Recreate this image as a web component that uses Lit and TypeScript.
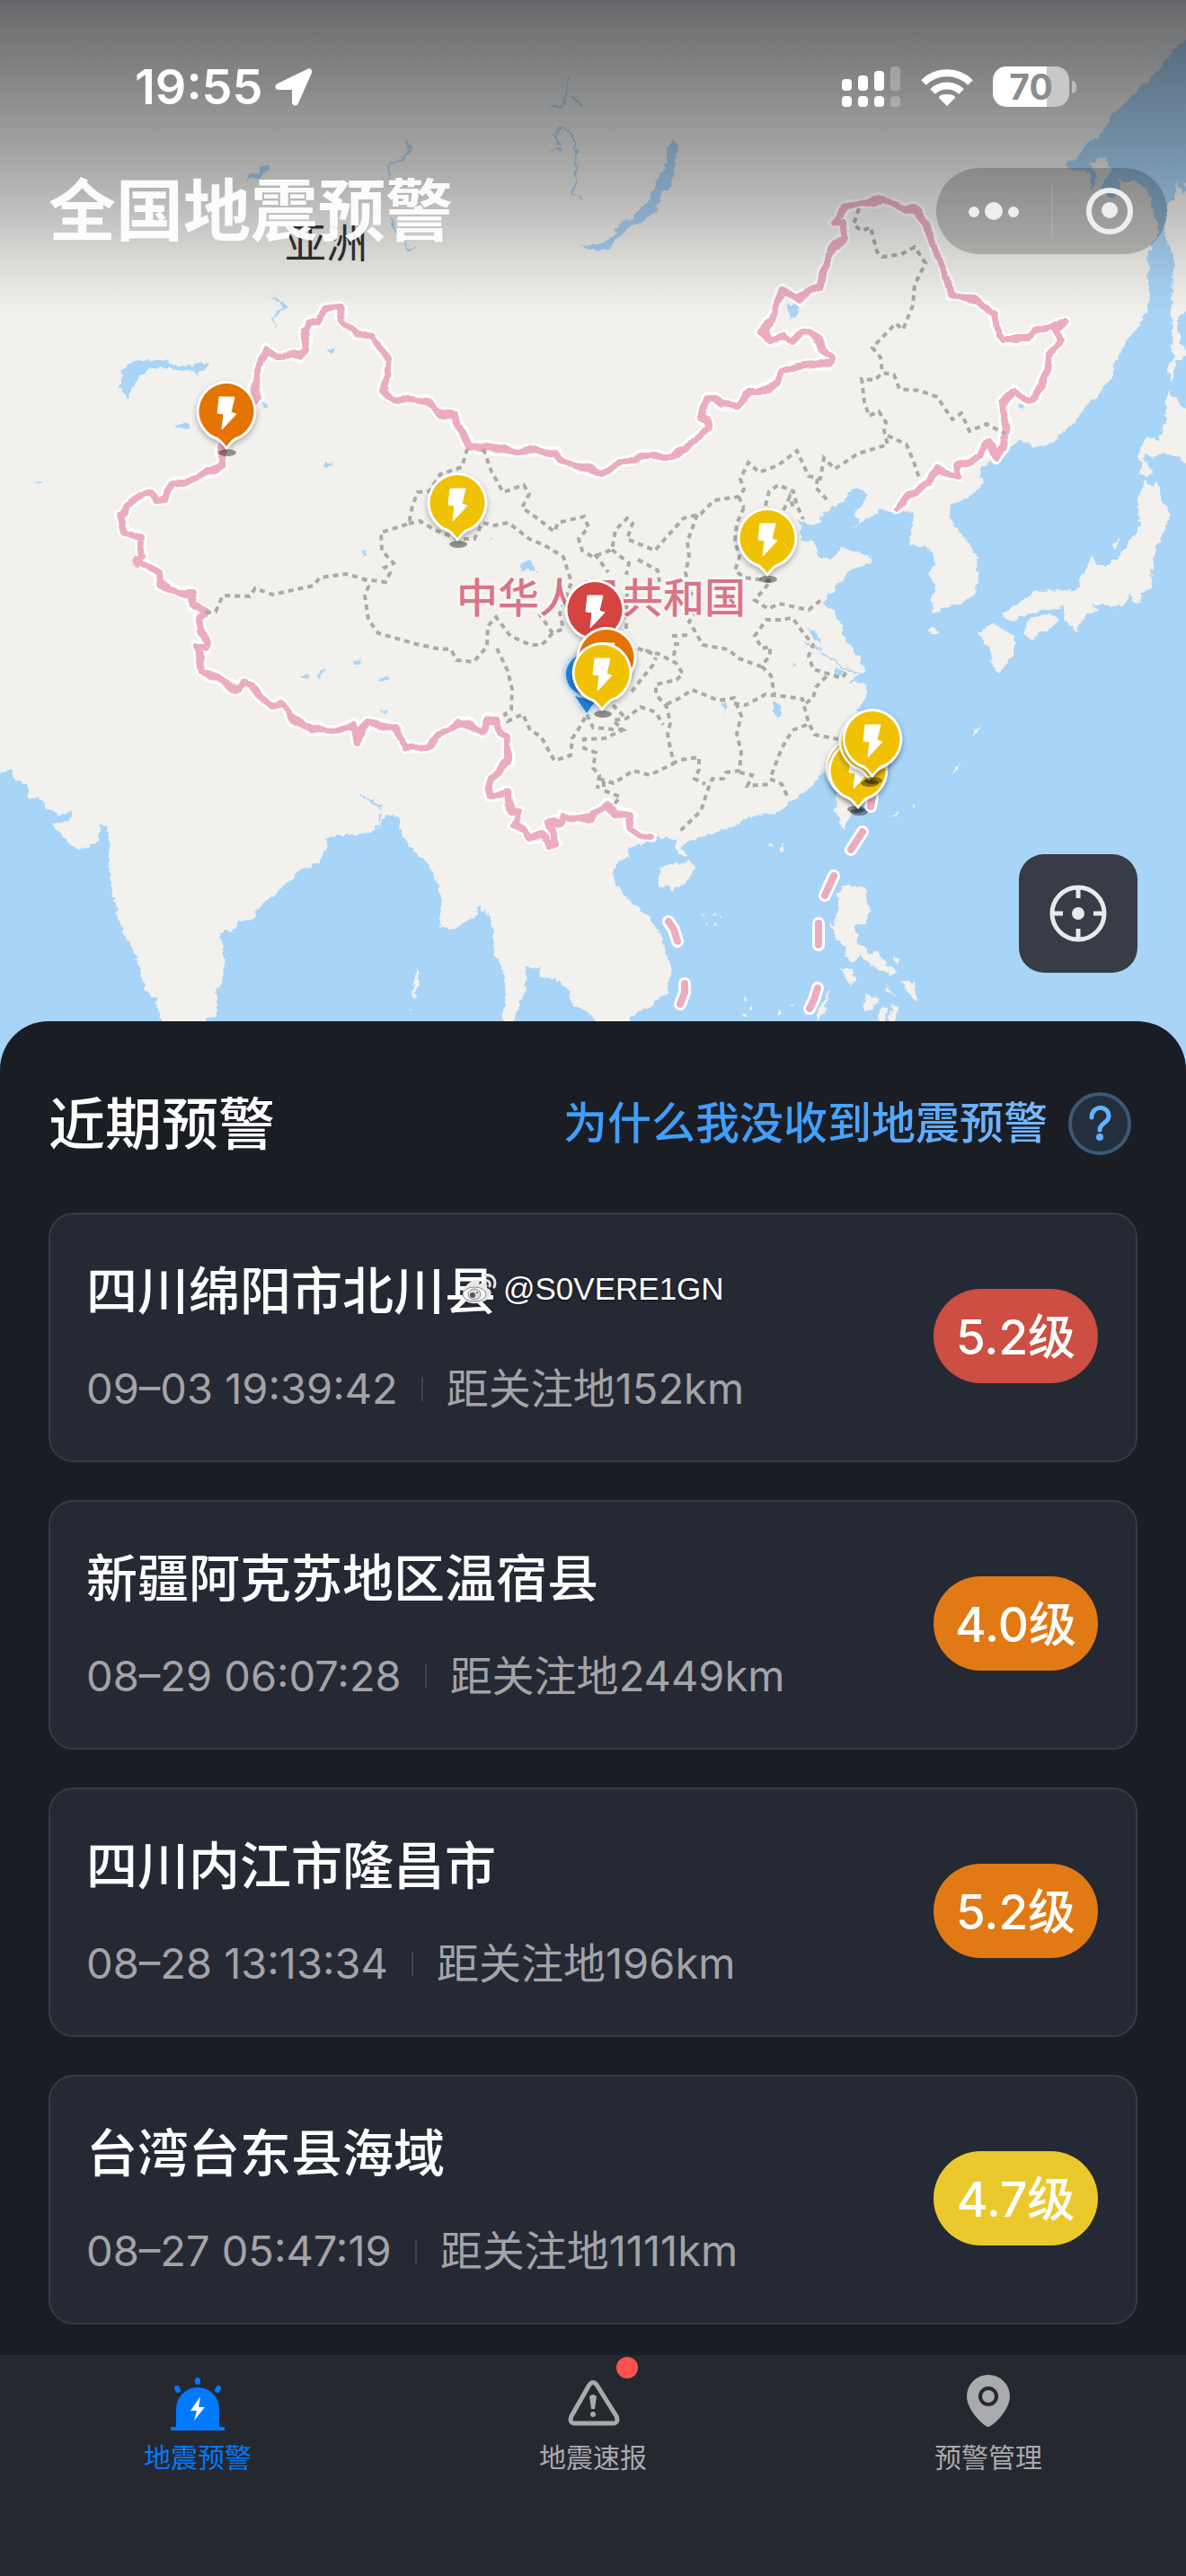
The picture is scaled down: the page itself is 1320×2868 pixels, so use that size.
import { LitElement, css, html, nothing, svg, type PropertyDeclarations } from 'lit';

type Level = 'red' | 'orange' | 'yellow';

interface Quake {
    place: string;
    time: string;
    distance: number;
    magnitude: string;
    level: Level;
}

interface Pin {
    x: number;
    y: number;
    level: Level;
}

const QUAKES: Quake[] = [
    { place: '四川绵阳市北川县', time: '09–03 19:39:42', distance: 152, magnitude: '5.2', level: 'red' },
    { place: '新疆阿克苏地区温宿县', time: '08–29 06:07:28', distance: 2449, magnitude: '4.0', level: 'orange' },
    { place: '四川内江市隆昌市', time: '08–28 13:13:34', distance: 196, magnitude: '5.2', level: 'orange' },
    { place: '台湾台东县海域', time: '08–27 05:47:19', distance: 1111, magnitude: '4.7', level: 'yellow' }
];

const PINS: Pin[] = [
    { x: 252, y: 458, level: 'orange' },
    { x: 509, y: 560, level: 'yellow' },
    { x: 854, y: 599, level: 'yellow' },
    { x: 662, y: 679, level: 'red' },
    { x: 675, y: 732, level: 'orange' },
    { x: 670, y: 749, level: 'yellow' },
    { x: 952, y: 855, level: 'yellow' },
    { x: 955, y: 858, level: 'yellow' },
    { x: 967, y: 826, level: 'yellow' },
    { x: 971, y: 823, level: 'yellow' }
];

const PIN_COLORS: Record<Level, string> = {
    red: '#d44440',
    orange: '#e57300',
    yellow: '#f1c204'
};

const MAINLAND = `M-30 -30 1350 -30 1350 30 1320 44 1300 63 1291 78 1266 100 1239 127 1226 148 1207 163 1201 173 1186 183 1195 191 1211 190
1216 213 1222 196 1212 182 1228 174 1238 190 1226 203 1228 217 1247 217 1245 202 1262 200 1279 213 1283 233 1291 260 1283 270 1277 287
1280 333 1270 360 1253 380 1243 400 1235 425 1211 450 1195 470 1173 492 1150 499 1136 489 1127 495 1115 507 1098 517 1091 525
1093 540 1077 555 1058 563 1056 577 1070 593 1087 620 1088 647 1083 665 1075 668 1039 682 1035 667 1041 657 1035 640
1037 632 1041 620 1032 611 1011 605 1014 590 1018 573 1003 568 980 568 963 578 948 589 957 580 950 573 965 553 961 543
948 543 936 560 919 568 913 582 902 585 889 580 892 600 908 602 909 620 923 623 938 610 971 619 969 628 950 633 934 647
925 660 915 673 931 683 942 715 959 733 961 748 946 758 962 760 965 773 955 790 958 800 934 835 917 858 902 877 879 893
866 905 837 909 816 920 795 928 765 937 759 943 764 952 755 952 752 937 742 932 727 930 715 940 700 943 698 953 685 963
682 978 696 997 723 1023 738 1047 746 1083 742 1107 727 1118 702 1130 700 1192 672 1192 664 1135 657 1128 640 1120
631 1100 617 1090 602 1089 601 1076 586 1077 585 1100 577 1123 571 1137 571 1192 560 1192 560 1137 563 1107 560 1080
551 1063 547 1027 535 1007 531 1020 513 1030 507 1035 488 1032 492 1003 486 980 476 962 455 943 448 930 440 908 429 907
421 923 396 930 375 930 362 933 364 947 354 961 333 970 311 992 284 1013 282 1023 267 1026 259 1037 250 1035 245 1043
250 1077 241 1107 242 1132 231 1133 231 1192 180 1192 180 1137 173 1113 162 1100 154 1077 147 1057 133 1030 124 990
120 963 122 943 118 918 112 918 110 937 88 947 78 940 57 917 76 915 81 902 67 908 51 900 44 890 32 888 29 872 17 870
13 857 0 859 -30 860Z`;

const ISLANDS = [
    // Sakhalin and the Japanese islands
    'M1300 230 1306 222 1310 200 1316 218 1320 205 1350 200 1350 345 1320 345 1312 355 1313 380 1320 390 1320 398 1310 402 1304 425 1300 407 1305 400 1304 333 1306 287 1296 260Z',
    'M1300 435 1320 457 1350 470 1350 525 1320 515 1307 508 1291 504 1283 513 1274 505 1273 513 1285 527 1269 530 1272 516 1265 510 1272 498 1275 485 1290 489 1298 470 1297 445Z',
    'M1275 535 1283 542 1289 533 1291 550 1303 573 1293 597 1285 613 1281 655 1270 660 1268 672 1258 663 1249 676 1216 672 1222 682 1211 683 1197 702 1184 690 1184 674 1157 680 1125 691 1115 683 1129 675 1152 658 1199 657 1207 637 1216 618 1220 630 1237 627 1258 603 1268 587 1266 557Z',
    'M1106 692 1118 702 1131 706 1127 730 1112 748 1102 740 1104 722 1096 717 1089 704Z',
    'M1144 690 1169 683 1178 693 1165 703 1158 702 1148 715 1140 705Z',
    'M1032 705 1036 699 1045 701 1042 705Z',
    'M1238 608 1244 600 1242 612Z',
    // Taiwan, Hainan
    'M955 830 975 820 965 870 950 903 943 912 940 924 929 903 931 888Z',
    'M734 970 744 960 758 962 767 957 773 963 765 983 750 992 734 985Z',
    // Philippines
    'M936 985 965 988 964 1003 969 1013 963 1026 952 1033 955 1053 970 1062 976 1058 984 1072 999 1083 993 1086 978 1078 965 1072 958 1062 951 1072 938 1063 943 1055 934 1050 923 1027 930 1032 933 1000Z',
    'M933 1076 948 1080 952 1088 948 1097 940 1086Z',
    'M1001 1092 1018 1093 1021 1115 1014 1110Z',
    'M963 1105 978 1112 973 1122 961 1127Z',
    'M982 1120 988 1122 984 1140 976 1140Z',
    'M985 1094 997 1108 990 1104Z',
    'M925 1098 920 1120 908 1140 914 1120Z',
    'M996 1062 1001 1070 997 1074Z',
    'M994 1118 1000 1124 994 1140 988 1140Z',
    // Paracel and Spratly reefs
    'M780 1018 784 1019 783 1022ZM794 1016 797 1018 795 1020ZM783 1028 788 1027 786 1031ZM794 1026 798 1030 794 1032ZM800 1018 803 1020 801 1022Z',
    'M826 1110 832 1113 828 1116ZM834 1120 839 1122 836 1126ZM828 1128 834 1130 830 1134ZM880 1118 886 1119 882 1122ZM866 1126 870 1130 866 1132Z',
    // Ryukyu chain and the Andamans
    'M1058 865 1062 855 1069 848 1066 856Z',
    'M1083 815 1092 809 1086 818Z',
    'M990 910 1001 903 998 909Z',
    'M1016 894 1020 898 1016 899Z',
    'M465 1075 467 1082 462 1112 459 1108Z',
    'M456 1122 459 1124 457 1128Z',
    'M870 940 874 945 870 947Z',
    'M857 935 860 941 857 943Z'
];

const LAKES = [
    'M750 156 755 160 750 190 746 210 736 214 732 235 702 253 685 267 678 277 650 279 650 272 668 272 681 265 688 250 702 244 719 227 732 200 742 180 743 163Z',
    'M133 430 138 410 150 402 180 401 200 408 214 407 231 403 229 411 219 415 200 410 170 410 158 417 150 426 146 432 143 446Z',
    'M276 197 290 188 297 183 300 188 288 196 274 203Z',
    'M194 472 212 473 210 477 196 475Z',
    'M291 446 297 448 297 452 291 450Z',
    'M365 390 372 386 371 392 367 394Z',
    'M877 340 888 338 885 350 879 356Z',
    'M579 628 588 623 597 630 597 636 580 635Z',
    'M359 516 364 514 370 519 361 520Z',
    'M391 735 403 733 401 739 395 740Z',
    'M335 752 343 751 342 755 336 755Z',
    'M420 755 432 752 430 758 421 759Z',
    'M353 752 358 744 360 747 355 755Z',
    'M422 790 432 792 428 796Z',
    'M399 615 408 614 407 617Z',
    'M542 598 547 599 545 602Z',
    'M38 535 46 536 44 539Z',
    'M1133 449 1141 449 1138 456Z',
    'M881 737 889 739 885 743Z',
    'M930 744 940 746 936 753 926 752Z',
    'M803 783 809 780 806 793Z',
    'M860 782 870 785 866 800 861 795Z',
    'M898 698 908 705 915 718 904 708Z'
];

const RIVERS = [
    'M453 155 457 168 448 176 432 184 433 198 440 214 M434 240 442 262 455 278 464 277',
    'M632 86 630 105 626 120 612 117 M636 108 648 118',
    'M626 140 620 150 623 162 M616 150 622 141 635 144 640 160 641 200 638 215 647 222 M612 168 625 165',
    'M305 330 317 342 304 354 305 364',
    'M400 886 415 892 424 900 M420 925 424 905 M430 908 434 922',
    'M895 715 910 722 930 738 955 750'
];

const BORDER = [
    `M247 517 248 497 262 470 286 445 283 430 292 400 297 390 307 397 335 396 342 390 339 367 343 360 356 357 361 343 377 341
381 357 398 372 415 375 423 388 433 400 431 420 427 437 438 443 476 447 490 460 505 463 518 488 524 500 543 497 577 503 598 501
617 505 623 512 652 521 671 527 692 515 713 507 746 507 763 500 776 485 790 477 781 463 786 443 795 443 803 450 820 452
835 435 854 435 864 427 870 414 887 407 913 404 925 405 925 398 913 382 900 370 891 371 882 380 875 374 858 380 849 368
860 353 870 323 889 332 913 318 915 307 927 277 940 263 938 248 927 247 942 229 984 222 1007 233 1018 232 1030 247
1041 280 1054 310 1058 328 1075 330 1089 335 1106 350 1110 370 1117 378 1142 378 1152 368 1184 360 1176 367 1180 380
1167 397 1165 413 1159 430 1148 445 1129 437 1115 450 1120 480 1117 497 1108 508 1100 493 1096 494 1091 507 1077 517
1064 517 1068 530 1056 529 1043 521 1033 538 1009 555 999 566`,
    'M247 500 247 517 236 523 206 538 192 538 183 555 173 556 168 547 156 552 141 562 139 572 134 575 139 592',
    'M145 593 156 600',
    'M157 607 159 618',
    `M154 624 168 632 176 638 177 650 185 652 200 660 213 660 216 675 229 683 222 688 224 703 232 717 229 723 218 720
223 733 225 748 238 752 248 760 265 768 271 760 280 762 286 773 303 787 314 784 324 797 347 812 373 813 394 807 398 826
402 812 410 804 440 810 446 823 452 833 478 832 488 818 511 804 526 808 537 815 543 800 552 803 558 818 564 820 564 848
547 867 544 878 546 888 566 883 568 902 577 903 572 920 583 922 589 933 604 928 610 940 618 938 612 917 623 915 628 908
640 913 657 910 676 897 685 905 702 907 700 922 713 931 724 932`
];

const SEA_DASHES = `M971 887 969 898M960 926 947 946M928 975 918 997M911 1028 911 1052M910 1100 906 1113 901 1123
M744 1026 750 1035 754 1048M762 1095 762 1105 757 1118`;

const PROVINCES = `M229 682 240 681 248 663 278 664 284 655 303 662 349 652 356 643 385 639 406 645 429 648 434 638 428 632 438 627
425 613 424 593 455 583 459 563 465 548 478 547 490 528 514 520 520 500
M455 583 467 580 484 590 509 600 528 600 537 582 551 585 566 582 589 600 606 607 627 620 636 648 623 683 627 700 615 705 600 683
M615 705 603 718 590 718 568 708 552 687 543 697 542 720 527 737 508 735 502 723 486 722 463 717 421 705 410 690 406 663 410 653 406 645
M538 500 547 525 560 548 583 540 589 550 581 565 598 577 617 592 621 582 650 575 655 587 644 600 648 613 660 620 681 612
685 590 698 577 704 583 698 600 729 613 740 600 761 577 780 572 795 557 822 553 828 545 824 533 833 515 845 526 866 518 887 502 900 530
913 533 917 510 929 522 955 505 988 495 984 480 986 470 978 458 967 463 962 447 959 422 974 423 982 415 995 417 1001 433 1024 435
1043 442 1060 467 1070 460 1079 480 1098 472 1119 483
M988 485 1009 495 1018 517 1024 535
M956 232 950 250 959 257 969 253 976 280 982 286 1003 283 1018 275 1030 293 1018 317 1016 340 1005 367 997 360 971 387 980 398 982 415
M822 553 828 565M852 563 856 547 866 540 883 547 887 563 894 578M872 568 879 553 884 568M910 533 908 543 921 557
M828 565 820 583 818 602 823 620 818 635 828 643 858 647 840 668 855 678 867 672 900 679 915 667
M776 573 765 603 767 620 763 637 768 660 783 670 767 692 773 702 782 718 810 723 822 733 847 742 857 730 857 720 848 722 840 708
853 690 868 690 882 688 893 703 905 718 900 730 905 745 937 755 945 745
M662 617 677 637M681 612 700 627 697 640M710 623 732 635 734 648M698 650 697 700
M553 722 565 747 570 767 569 790 562 795 565 803 582 795 590 813 602 820 617 847 635 841 637 822 647 807 653 795 660 810 682 812
693 812 682 802 697 800 713 787 730 793 738 807
M695 812 673 822 650 823 650 833 663 838 660 855 667 863 665 878M667 867 683 872 705 858 723 863 750 850 745 828 743 817 746 805
742 787 730 773 730 762 753 757 760 750 752 738 733 728 710 722
M703 770 713 757 727 740 730 732M682 785 697 800
M742 784 757 777 770 768 783 773 800 780 817 777 825 797 820 817 825 837 823 858 808 860 805 867 793 867 790 873 780 903 755 927
M748 850 758 846 778 843 778 857 773 867 785 873
M817 783 830 785 852 773 870 775 893 778 900 805 907 818 933 823
M848 742 858 752 862 773M897 783 905 777 908 765 920 753
M898 807 882 813 870 833 857 867 870 873 877 888M823 860 837 863 832 875 857 873
M748 708 767 707M750 730 752 717 758 717M672 870 672 880 690 887 682 898M710 722 730 729`;

class QuakeMap extends LitElement {
    static styles = css`
        :host {
            display: block;
            overflow: hidden;
            background: #a8d4f7;
        }

        svg {
            display: block;
            width: 100%;
            height: 100%;
        }

        .land {
            fill: #f2f1ed;
        }

        .lake {
            fill: #a8d4f7;
        }

        .river {
            fill: none;
            stroke: #a8d4f7;
            stroke-width: 2;
        }

        .border {
            fill: none;
            stroke-linecap: round;
            stroke-linejoin: round;
        }

        .halo {
            stroke: #fff;
            stroke-width: 14;
        }

        .line {
            stroke: #ecacc0;
            stroke-width: 8;
        }

        .provinces {
            fill: none;
            stroke: #a9a9a9;
            stroke-width: 4;
            stroke-dasharray: 6 5;
        }

        .label {
            font-family: 'Noto Sans CJK SC', sans-serif;
            font-size: 46px;
            text-anchor: middle;
            paint-order: stroke;
            stroke-linejoin: round;
            stroke-width: 5;
        }

        .country {
            fill: #d97587;
            stroke: #f8f7f5;
            font-weight: 500;
        }

        .continent {
            fill: #2e2e2e;
            stroke: #f2f1ed;
        }
    `;

    render() {
        return html`<svg viewBox="0 0 1320 1191" preserveAspectRatio="xMidYMid slice" role="img" aria-label="地震预警地图">
            <defs>
                <filter id="coast" x="-30" y="-30" width="1380" height="1251" filterUnits="userSpaceOnUse">
                    <feTurbulence type="fractalNoise" baseFrequency="0.12" numOctaves="3" seed="4" />
                    <feDisplacementMap in="SourceGraphic" scale="9" xChannelSelector="R" yChannelSelector="G" />
                </filter>
                <filter id="wobble" x="-30" y="-30" width="1380" height="1251" filterUnits="userSpaceOnUse">
                    <feTurbulence type="fractalNoise" baseFrequency="0.06" numOctaves="1" seed="7" />
                    <feDisplacementMap in="SourceGraphic" scale="10" xChannelSelector="R" yChannelSelector="G" />
                </filter>
                <filter id="drop" x="-30%" y="-30%" width="160%" height="160%">
                    <feDropShadow dx="0" dy="3" stdDeviation="3" flood-opacity="0.3" />
                </filter>
                <filter id="glow" x="-50%" y="-50%" width="200%" height="200%">
                    <feDropShadow dx="0" dy="0" stdDeviation="4" flood-color="#1f7fd8" flood-opacity="0.7" />
                </filter>
            </defs>
            <g filter="url(#coast)">
                <path class="land" d=${MAINLAND} />
                ${ISLANDS.map(d => svg`<path class="land" d=${d} />`)}
                ${LAKES.map(d => svg`<path class="lake" d=${d} />`)}
                ${RIVERS.map(d => svg`<path class="river" d=${d} />`)}
            </g>
            <path class="border halo" d=${SEA_DASHES} />
            <path class="border line" d=${SEA_DASHES} />
            <g filter="url(#wobble)">
                ${BORDER.map(d => svg`<path class="border halo" d=${d} />`)}
                ${BORDER.map(d => svg`<path class="border line" d=${d} />`)}
                <circle cx="154" cy="625" r="7" fill="#ecacc0" />
            </g>
            <path class="provinces" d=${PROVINCES} />
            <text class="label continent" x="363" y="287">亚洲</text>
            <text class="label country" x="669" y="682">中华人民共和国</text>
            <g filter="url(#glow)">
                <circle cx="653" cy="751" r="23" fill="#2280d8" />
                <path d="M640 775Q653 780 666 775L653 794Z" fill="#2280d8" />
            </g>
            ${PINS.map(pin => this.renderPin(pin))}
        </svg>`;
    }

    private renderPin(pin: Pin) {
        return svg`<g transform="translate(${pin.x} ${pin.y})">
            <ellipse cx="1" cy="46" rx="10" ry="4" fill="#000" fill-opacity="0.4" />
            <path filter="url(#drop)" fill="#fff" d="M0 -34A34 34 0 0 1 12 31.500Q7 33 0 43Q-7 33 -12 31.500A34 34 0 0 1 0 -34Z" />
            <path fill=${PIN_COLORS[pin.level]} d="M0 -31A31 31 0 0 1 9 29.500Q6 31 0 39Q-6 31 -9 29.500A31 31 0 0 1 0 -31Z" />
            <path fill="#fff" stroke="#fff" stroke-linejoin="round" d="M-8 -16H9L5 1L11 3L-5 20L-3 3L-10 2Z" />
        </g>`;
    }
}

customElements.define('quake-map', QuakeMap);

class QuakeCard extends LitElement {
    static properties: PropertyDeclarations = {
        quake: { attribute: false }
    };

    static styles = css`
        :host {
            display: flex;
            align-items: center;
            justify-content: space-between;
            gap: 24px;
            box-sizing: border-box;
            min-height: 278px;
            padding: 36px 42px 40px 40px;
            border: 2px solid #383b44;
            border-radius: 28px;
            background: #252933;
        }

        .info {
            padding-top: 4px;
        }

        .place {
            margin: 0 0 30px;
            color: #fff;
            font-size: 57px;
            font-weight: 500;
            line-height: 84px;
        }

        .meta {
            display: flex;
            align-items: center;
            gap: 26px;
            color: #a3a4a8;
            font-size: 47px;
            line-height: 72px;
        }

        .separator {
            width: 2px;
            height: 27px;
            background: #40444e;
        }

        .badge {
            display: grid;
            place-items: center;
            flex: none;
            box-sizing: border-box;
            width: 183px;
            height: 105px;
            padding-bottom: 4px;
            border-radius: 53px;
            color: #fff;
            font-size: 53px;
            font-weight: 500;
            white-space: nowrap;
        }

        .badge-red {
            background: #cd4e42;
        }

        .badge-orange {
            background: #e17a14;
        }

        .badge-yellow {
            background: #ebc92c;
        }
    `;

    quake?: Quake;

    render() {
        if (!this.quake) {
            return nothing;
        }

        const { place, time, distance, magnitude, level } = this.quake;

        return html`<div class="info">
                <h3 class="place">${place}</h3>
                <div class="meta">
                    <time>${time}</time>
                    <span class="separator"></span>
                    <span>距关注地${distance}km</span>
                </div>
            </div>
            <span class="badge badge-${level}">${magnitude}级</span>`;
    }
}

customElements.define('quake-card', QuakeCard);

class AppRoot extends LitElement {
    static styles = css`
        :host {
            position: relative;
            display: flex;
            flex-direction: column;
            min-height: 100vh;
            background: #1a1d24;
            color: #fff;
            font-family: Inter, 'Noto Sans CJK SC', sans-serif;
        }

        a {
            color: inherit;
            text-decoration: none;
        }

        button {
            padding: 0;
            border: none;
            background: none;
            color: inherit;
            cursor: pointer;
        }

        svg {
            display: block;
        }

        .hero {
            position: relative;
            display: flex;
            flex-direction: column;
            box-sizing: border-box;
            aspect-ratio: 1320 / 1191;
            padding: 74px 54px 108px;
        }

        .map,
        .shade {
            position: absolute;
            inset: 0;
        }

        .shade {
            bottom: auto;
            height: 350px;
            background: linear-gradient(
                rgba(28, 30, 36, 0.65),
                rgba(28, 30, 36, 0.42) 40%,
                rgba(28, 30, 36, 0.31) 57%,
                rgba(28, 30, 36, 0.2) 72%,
                rgba(28, 30, 36, 0.09) 86%,
                rgba(28, 30, 36, 0)
            );
            pointer-events: none;
        }

        .status,
        .title-row {
            position: relative;
            display: flex;
            align-items: center;
            justify-content: space-between;
        }

        .status {
            height: 45px;
            padding: 0 68px 0 96px;
        }

        .clock {
            display: flex;
            align-items: center;
            gap: 12px;
            font-size: 54px;
            font-weight: 600;
            line-height: 48px;
        }

        .indicators {
            display: flex;
            align-items: center;
            gap: 22px;
        }

        .battery {
            display: flex;
            align-items: center;
            gap: 3px;
        }

        .battery-body {
            display: grid;
            place-items: center;
            width: 85px;
            height: 45px;
            border-radius: 15px;
            background: linear-gradient(90deg, #fff 71%, #c8c8c8 71%);
            color: #8b8c8d;
            font-size: 39px;
            font-weight: 700;
            line-height: 45px;
        }

        .battery-tip {
            width: 5px;
            height: 14px;
            border-radius: 0 5px 5px 0;
            background: #bcbcbc;
        }

        .title-row {
            margin: 68px -33px 0 0;
        }

        h1 {
            margin: 0;
            color: rgba(255, 255, 255, 0.95);
            font-size: 75px;
            font-weight: 700;
            line-height: 96px;
        }

        .capsule {
            display: flex;
            align-items: center;
            width: 257px;
            height: 96px;
            border-radius: 48px;
            background: rgba(0, 0, 0, 0.2);
        }

        .capsule button {
            display: grid;
            flex: 1;
            height: 100%;
            place-items: center;
        }

        .capsule-line {
            width: 1px;
            height: 60px;
            background: rgba(255, 255, 255, 0.15);
        }

        .locate {
            position: relative;
            display: grid;
            place-items: center;
            align-self: flex-end;
            width: 132px;
            height: 132px;
            margin-top: auto;
            border-radius: 28px;
            background: #373c46;
        }

        .sheet {
            position: relative;
            flex: 1;
            margin-top: -54px;
            padding: 79px 54px 34px;
            border-radius: 54px 54px 0 0;
            background: #1a1d24;
        }

        .sheet-head {
            display: flex;
            align-items: center;
            justify-content: space-between;
            height: 70px;
            margin-bottom: 64px;
            padding-right: 7px;
        }

        h2 {
            margin: 0;
            font-size: 63px;
            font-weight: 500;
            line-height: 72px;
        }

        .why {
            display: flex;
            align-items: center;
            gap: 23px;
        }

        .why-text {
            background: linear-gradient(90deg, #409eff 50%, #79bbff);
            background-clip: text;
            color: transparent;
            font-size: 49px;
            font-weight: 500;
            line-height: 72px;
        }

        .list {
            display: grid;
            gap: 42px;
            margin: 0;
            padding: 0;
            list-style: none;
        }

        .watermark {
            position: absolute;
            top: 1411px;
            left: 512px;
            display: flex;
            align-items: center;
            gap: 6px;
            font-family: 'Liberation Sans', sans-serif;
            font-size: 35px;
            line-height: 48px;
            text-shadow: 0 1px 3px rgba(0, 0, 0, 0.6);
            pointer-events: none;
        }

        .tabs {
            display: grid;
            grid-template-columns: repeat(3, 1fr);
            box-sizing: border-box;
            min-height: 246px;
            padding-top: 20px;
            background: #26282f;
        }

        .tab {
            display: flex;
            flex-direction: column;
            align-items: center;
            gap: 2px;
            color: #a9aaac;
            font-size: 30px;
            line-height: 48px;
        }

        .tab-active {
            color: #007aff;
        }

        .tab-icon {
            position: relative;
        }

        .tab-dot {
            position: absolute;
            top: -18px;
            right: -16px;
            width: 24px;
            height: 24px;
            border-radius: 50%;
            background: #fd5150;
        }
    `;

    render() {
        return html`
            <header class="hero">
                <quake-map class="map"></quake-map>
                <div class="shade"></div>
                ${this.renderStatus()}
                <div class="title-row">
                    <h1>全国地震预警</h1>
                    <div class="capsule">
                        <button type="button" aria-label="更多">
                            <svg width="60" height="24" viewBox="0 0 60 24" fill="#eee">
                                <circle cx="8" cy="13" r="6" />
                                <circle cx="30" cy="12" r="10" />
                                <circle cx="52" cy="13" r="6" />
                            </svg>
                        </button>
                        <span class="capsule-line"></span>
                        <button type="button" aria-label="关闭">
                            <svg width="52" height="52" viewBox="0 0 52 52">
                                <circle cx="26" cy="26" r="23" fill="none" stroke="#eee" stroke-width="6" />
                                <circle cx="26" cy="25" r="9" fill="#eee" />
                            </svg>
                        </button>
                    </div>
                </div>
                <button class="locate" type="button" aria-label="定位">
                    <svg width="64" height="64" viewBox="0 0 64 64" fill="none" stroke="#e9e9ec" stroke-width="5">
                        <circle cx="32" cy="32" r="29" />
                        <path d="M32 3V15M32 49V61M3 32H15M49 32H61" />
                        <circle cx="32" cy="32" r="7" fill="#e9e9ec" stroke="none" />
                    </svg>
                </button>
            </header>
            <main class="sheet">
                <div class="sheet-head">
                    <h2>近期预警</h2>
                    <a class="why" href="#why">
                        <span class="why-text">为什么我没收到地震预警</span>
                        <svg width="70" height="70" viewBox="0 0 70 70" fill="none" aria-hidden="true">
                            <circle cx="35" cy="35" r="33" fill="#232f3d" stroke="#3a5a78" stroke-width="4" />
                            <path d="M26 28C26 14 45 14 45 27C45 34 35 34 35 42" stroke="#66b1ff" stroke-width="5" stroke-linecap="round" />
                            <circle cx="35" cy="50" r="4" fill="#66b1ff" />
                        </svg>
                    </a>
                </div>
                <ul class="list">
                    ${QUAKES.map(quake => html`<li><quake-card .quake=${quake}></quake-card></li>`)}
                </ul>
            </main>
            <nav class="tabs">${this.renderTabs()}</nav>
            <div class="watermark">${this.renderWeibo()}<span>@S0VERE1GN</span></div>
        `;
    }

    private renderStatus() {
        return html`<div class="status">
            <div class="clock">
                <span>19:55</span>
                <svg width="44" height="44" viewBox="0 0 44 44" fill="#fff">
                    <path d="M37 2C40 0 43 3 42 6L27 40C25 44 20 43 20 39V25H5C1 25 0 20 4 18Z" />
                </svg>
            </div>
            <div class="indicators">
                <svg width="66" height="45" viewBox="0 0 66 45" fill="#fff">
                    <rect x="0" y="14" width="11" height="13" rx="4" />
                    <rect x="18" y="10" width="11" height="17" rx="4" />
                    <rect x="36" y="5" width="11" height="22" rx="4" />
                    <rect x="54" y="0" width="11" height="27" rx="4" opacity="0.25" />
                    <rect x="0" y="33" width="11" height="12" rx="4" />
                    <rect x="18" y="33" width="11" height="12" rx="4" />
                    <rect x="36" y="33" width="11" height="12" rx="4" />
                    <rect x="54" y="33" width="11" height="12" rx="4" opacity="0.25" />
                </svg>
                <svg width="58" height="43" viewBox="0 0 58 43">
                    <g fill="none" stroke="#fff" stroke-width="8">
                        <path d="M3 17A37 37 0 0 1 55 17" />
                        <path d="M13 27A23 23 0 0 1 45 27" />
                    </g>
                    <path fill="#fff" d="M29 43L20 34Q20 30 29 30Q38 30 38 34Z" />
                </svg>
                <div class="battery">
                    <span class="battery-body">70</span>
                    <span class="battery-tip"></span>
                </div>
            </div>
        </div>`;
    }

    private renderTabs() {
        return html`
            <a class="tab tab-active" href="#warning" aria-current="page">
                <svg class="tab-icon" width="68" height="68" viewBox="0 0 68 68" fill="currentColor">
                    <path d="M4 60H10V40A24 24 0 0 1 58 40V60H64V64H4Z" />
                    <g stroke="currentColor" stroke-width="6" stroke-linecap="round">
                        <path d="M34 8V10M11 17L12 19M57 17L56 19" />
                    </g>
                    <path fill="#fff" d="M37 26L26 42H33L30 53L42 38H35Z" />
                </svg>
                <span>地震预警</span>
            </a>
            <a class="tab" href="#report">
                <span class="tab-icon">
                    <svg width="68" height="68" viewBox="0 0 68 68" fill="none" stroke="currentColor" stroke-linejoin="round">
                        <path stroke-width="5" d="M30 13Q34 8 38 13L60 48Q63 56 56 56H14Q7 56 10 48Z" />
                        <path fill="currentColor" stroke="none" d="M30 26Q34 22 38 26L36 40H32Z" />
                        <circle cx="34" cy="46" r="3" fill="currentColor" stroke="none" />
                    </svg>
                    <span class="tab-dot"></span>
                </span>
                <span>地震速报</span>
            </a>
            <a class="tab" href="#manage">
                <svg class="tab-icon" width="68" height="68" viewBox="0 0 68 68" fill="currentColor">
                    <path fill-rule="evenodd" d="M34 2A24 24 0 0 1 58 26C58 42 38 60 34 60S10 42 10 26A24 24 0 0 1 34 2ZM34 15A11 11 0 1 0 34 37A11 11 0 1 0 34 15Z" />
                    <circle cx="34" cy="26" r="7" />
                </svg>
                <span>预警管理</span>
            </a>
        `;
    }

    private renderWeibo() {
        return html`<svg width="42" height="36" viewBox="0 0 42 36" aria-hidden="true">
            <path fill="#e8e8e8" d="M3 22C5 13 14 7 19 8C22 8 22 11 21 13C27 10 32 12 30 17C36 19 36 25 31 29C24 35 12 36 6 31C3 29 2 26 3 22Z" />
            <ellipse cx="16" cy="24" rx="13" ry="8" fill="#f7f7f7" stroke="#8b8b8b" />
            <ellipse cx="16" cy="24" rx="7" ry="6" fill="#ddd" stroke="#8b8b8b" />
            <circle cx="14" cy="25" r="3" fill="#555" />
            <circle cx="19" cy="22" r="1" fill="#555" />
            <path fill="none" stroke="#e4e4e4" stroke-width="3" stroke-linecap="round" d="M27 3C36 1 41 8 38 16M28 9C32 8 34 11 33 15" />
        </svg>`;
    }
}

customElements.define('app-root', AppRoot);
